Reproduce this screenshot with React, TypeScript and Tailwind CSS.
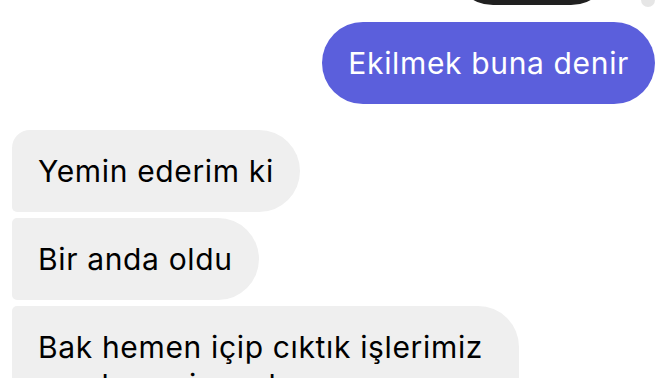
import React from "react";

export default function App() {
  const font = { fontFamily: "Inter, 'Noto Sans', sans-serif" };
  return (
    <div
      className="relative w-[672px] h-[378px] overflow-hidden bg-white text-[30px] leading-[38px] tracking-[0.65px]"
      style={font}
    >
      <div className="flex flex-col">
        <div className="relative flex justify-end pr-[60px] -mt-[77px]">
          <div className="h-[82px] w-[160px] rounded-full bg-[#202020]" />
          <div className="absolute right-[17px] top-[70px] h-[14px] w-[14px] rounded-full bg-[#e6e6e6]" />
        </div>
        <div className="flex justify-end pr-[17px] mt-[17px]">
          <div className="rounded-full bg-[#5b5fdc] px-[26px] py-[22px] text-white">
            Ekilmek buna denir
          </div>
        </div>
        <div className="flex flex-col items-start gap-[6px] pl-[12px] mt-[26px] text-black">
          <div className="rounded-r-[41px] rounded-tl-[18px] rounded-bl-[5px] bg-[#efefef] px-[26px] py-[22px]">
            Yemin ederim ki
          </div>
          <div className="rounded-r-[41px] rounded-l-[5px] bg-[#efefef] px-[26px] py-[22px]">
            Bir anda oldu
          </div>
          <div className="rounded-r-[41px] rounded-tl-[5px] rounded-bl-[18px] bg-[#efefef] pl-[26px] pr-[36px] py-[22px] whitespace-nowrap">
            Bak hemen içip cıktık işlerimiz
            <br />
            ona hevesim yok şu an
          </div>
        </div>
      </div>
    </div>
  );
}
